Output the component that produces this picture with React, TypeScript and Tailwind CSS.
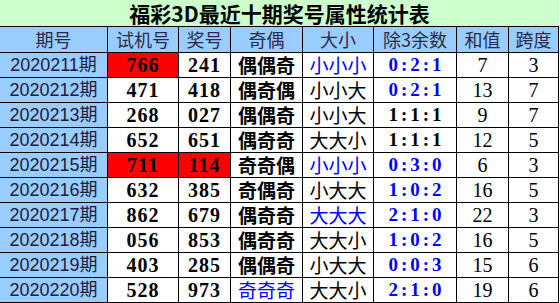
const rows = [
  { qi: "2020211期", sj: "766", jh: "241", jo: "偶偶奇", dx: "小小小", dxBlue: true, yu: "0:2:1", yuBlue: true, hz: "7", kd: "3", sjRed: true },
  { qi: "2020212期", sj: "471", jh: "418", jo: "偶奇偶", dx: "小小大", yu: "0:2:1", yuBlue: true, hz: "13", kd: "7" },
  { qi: "2020213期", sj: "268", jh: "027", jo: "偶偶奇", dx: "小小大", yu: "1:1:1", hz: "9", kd: "7" },
  { qi: "2020214期", sj: "652", jh: "651", jo: "偶奇奇", dx: "大大小", yu: "1:1:1", hz: "12", kd: "5" },
  { qi: "2020215期", sj: "711", jh: "114", jo: "奇奇偶", dx: "小小小", dxBlue: true, yu: "0:3:0", yuBlue: true, hz: "6", kd: "3", sjRed: true, jhRed: true },
  { qi: "2020216期", sj: "632", jh: "385", jo: "奇偶奇", dx: "小大大", yu: "1:0:2", yuBlue: true, hz: "16", kd: "5" },
  { qi: "2020217期", sj: "862", jh: "679", jo: "偶奇奇", dx: "大大大", dxBlue: true, yu: "2:1:0", yuBlue: true, hz: "22", kd: "3" },
  { qi: "2020218期", sj: "056", jh: "853", jo: "偶奇奇", dx: "大大小", yu: "1:0:2", yuBlue: true, hz: "16", kd: "5" },
  { qi: "2020219期", sj: "403", jh: "285", jo: "偶偶奇", dx: "小大大", yu: "0:0:3", yuBlue: true, hz: "15", kd: "6" },
  { qi: "2020220期", sj: "528", jh: "973", jo: "奇奇奇", joBlue: true, dx: "大大小", yu: "2:1:0", yuBlue: true, hz: "19", kd: "6" },
];

const headers = ["期号", "试机号", "奖号", "奇偶", "大小", "除3余数", "和值", "跨度"];

const cjk = "font-['Noto_Sans_CJK_SC',sans-serif]";
const serif = "font-['Liberation_Serif','Noto_Sans_CJK_SC',serif]";
const cell = "flex items-center justify-center border-r border-b border-black h-[25px] leading-[24px]";

export default function App() {
  return (
    <div className="w-[560px] h-[303px] bg-white overflow-hidden">
      <div className="grid grid-cols-[108px_71px_52px_72px_71px_83px_52px_50px] w-[559px]">
        <div className="col-span-8 h-[27px] bg-[#ccffcc] border-b border-black flex items-center justify-center">
          <span className={`text-[21px] font-bold text-black leading-[22px] ${cjk}`}>
            福彩3D最近十期奖号属性统计表
          </span>
        </div>
        {headers.map((h) => (
          <div
            key={h}
            className={`flex items-center justify-center border-r border-b border-black h-[26px] bg-[#99ccff] text-[18px] text-[#2a2a48] leading-[25px] ${cjk}`}
          >
            {h}
          </div>
        ))}
        {rows.map((r) => (
          <div key={r.qi} className="contents">
            <div className={`${cell} bg-[#99ccff] text-[18px] text-[#1c1c3c] font-['Liberation_Sans','Noto_Sans_CJK_SC',sans-serif]`}>
              {r.qi}
            </div>
            <div className={`${cell} ${r.sjRed ? "bg-[#ff0000]" : "bg-white"} text-[20px] font-bold text-black tracking-[1px] ${serif}`}>
              {r.sj}
            </div>
            <div className={`${cell} ${r.jhRed ? "bg-[#ff0000]" : "bg-white"} text-[20px] font-bold text-black tracking-[1px] ${serif}`}>
              {r.jh}
            </div>
            <div className={`${cell} bg-white text-[19px] ${r.joBlue ? "text-[#0000ff] font-normal" : "text-black font-bold"} ${cjk}`}>
              {r.jo}
            </div>
            <div className={`${cell} bg-white text-[19px] ${r.dxBlue ? "text-[#0000ff]" : "text-black"} ${cjk}`}>
              {r.dx}
            </div>
            <div className={`${cell} bg-white text-[19px] font-bold tracking-[3px] pl-[3px] ${r.yuBlue ? "text-[#0000ff]" : "text-black"} ${serif}`}>
              {r.yu}
            </div>
            <div className={`${cell} bg-white text-[20px] text-black ${serif}`}>{r.hz}</div>
            <div className={`${cell} bg-white text-[20px] text-black ${serif}`}>{r.kd}</div>
          </div>
        ))}
      </div>
    </div>
  );
}
